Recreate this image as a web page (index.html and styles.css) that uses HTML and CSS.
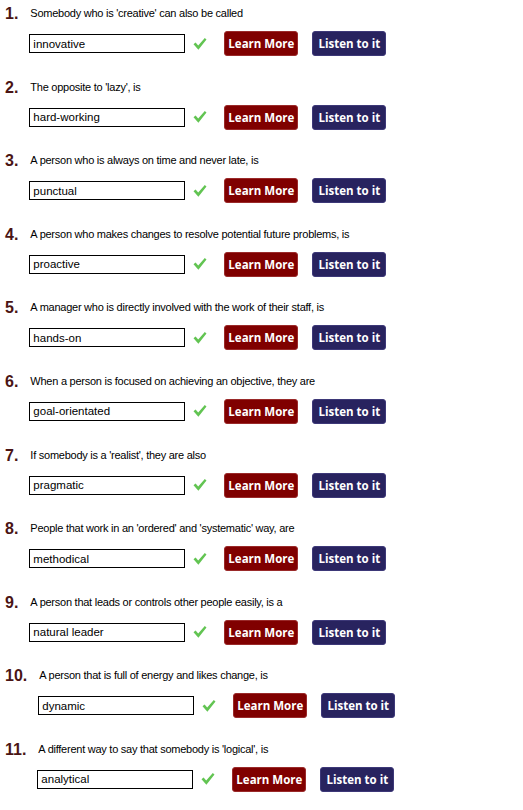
FILE: index.html
```html
<!DOCTYPE html>
<html>
<head>
<meta charset="utf-8">
<link rel="stylesheet" href="styles.css">
</head>
<body>
<ol class="quiz">
  <li class="item"><span class="num">1.</span><div class="body"><p class="q">Somebody who is 'creative' can also be called</p><div class="controls"><input class="answer" value="innovative" readonly><svg class="tick" viewBox="0 0 14 14"><path d="M0.5 7.2 L2.6 5.6 L5.2 8.6 L11.8 1 L13.5 2.5 L5.4 12.8 Z"/></svg><button class="btn learn">Learn More</button><button class="btn listen">Listen to it</button></div></div></li>
  <li class="item"><span class="num">2.</span><div class="body"><p class="q">The opposite to 'lazy', is</p><div class="controls"><input class="answer" value="hard-working" readonly><svg class="tick" viewBox="0 0 14 14"><path d="M0.5 7.2 L2.6 5.6 L5.2 8.6 L11.8 1 L13.5 2.5 L5.4 12.8 Z"/></svg><button class="btn learn">Learn More</button><button class="btn listen">Listen to it</button></div></div></li>
  <li class="item"><span class="num">3.</span><div class="body"><p class="q">A person who is always on time and never late, is</p><div class="controls"><input class="answer" value="punctual" readonly><svg class="tick" viewBox="0 0 14 14"><path d="M0.5 7.2 L2.6 5.6 L5.2 8.6 L11.8 1 L13.5 2.5 L5.4 12.8 Z"/></svg><button class="btn learn">Learn More</button><button class="btn listen">Listen to it</button></div></div></li>
  <li class="item"><span class="num">4.</span><div class="body"><p class="q">A person who makes changes to resolve potential future problems, is</p><div class="controls"><input class="answer" value="proactive" readonly><svg class="tick" viewBox="0 0 14 14"><path d="M0.5 7.2 L2.6 5.6 L5.2 8.6 L11.8 1 L13.5 2.5 L5.4 12.8 Z"/></svg><button class="btn learn">Learn More</button><button class="btn listen">Listen to it</button></div></div></li>
  <li class="item"><span class="num">5.</span><div class="body"><p class="q">A manager who is directly involved with the work of their staff, is</p><div class="controls"><input class="answer" value="hands-on" readonly><svg class="tick" viewBox="0 0 14 14"><path d="M0.5 7.2 L2.6 5.6 L5.2 8.6 L11.8 1 L13.5 2.5 L5.4 12.8 Z"/></svg><button class="btn learn">Learn More</button><button class="btn listen">Listen to it</button></div></div></li>
  <li class="item"><span class="num">6.</span><div class="body"><p class="q">When a person is focused on achieving an objective, they are</p><div class="controls"><input class="answer" value="goal-orientated" readonly><svg class="tick" viewBox="0 0 14 14"><path d="M0.5 7.2 L2.6 5.6 L5.2 8.6 L11.8 1 L13.5 2.5 L5.4 12.8 Z"/></svg><button class="btn learn">Learn More</button><button class="btn listen">Listen to it</button></div></div></li>
  <li class="item"><span class="num">7.</span><div class="body"><p class="q">If somebody is a 'realist', they are also</p><div class="controls"><input class="answer" value="pragmatic" readonly><svg class="tick" viewBox="0 0 14 14"><path d="M0.5 7.2 L2.6 5.6 L5.2 8.6 L11.8 1 L13.5 2.5 L5.4 12.8 Z"/></svg><button class="btn learn">Learn More</button><button class="btn listen">Listen to it</button></div></div></li>
  <li class="item"><span class="num">8.</span><div class="body"><p class="q">People that work in an 'ordered' and 'systematic' way, are</p><div class="controls"><input class="answer" value="methodical" readonly><svg class="tick" viewBox="0 0 14 14"><path d="M0.5 7.2 L2.6 5.6 L5.2 8.6 L11.8 1 L13.5 2.5 L5.4 12.8 Z"/></svg><button class="btn learn">Learn More</button><button class="btn listen">Listen to it</button></div></div></li>
  <li class="item"><span class="num">9.</span><div class="body"><p class="q">A person that leads or controls other people easily, is a</p><div class="controls"><input class="answer" value="natural leader" readonly><svg class="tick" viewBox="0 0 14 14"><path d="M0.5 7.2 L2.6 5.6 L5.2 8.6 L11.8 1 L13.5 2.5 L5.4 12.8 Z"/></svg><button class="btn learn">Learn More</button><button class="btn listen">Listen to it</button></div></div></li>
  <li class="item"><span class="num">10.</span><div class="body"><p class="q">A person that is full of energy and likes change, is</p><div class="controls"><input class="answer" value="dynamic" readonly><svg class="tick" viewBox="0 0 14 14"><path d="M0.5 7.2 L2.6 5.6 L5.2 8.6 L11.8 1 L13.5 2.5 L5.4 12.8 Z"/></svg><button class="btn learn">Learn More</button><button class="btn listen">Listen to it</button></div></div></li>
  <li class="item"><span class="num">11.</span><div class="body"><p class="q">A different way to say that somebody is 'logical', is</p><div class="controls"><input class="answer" value="analytical" readonly><svg class="tick" viewBox="0 0 14 14"><path d="M0.5 7.2 L2.6 5.6 L5.2 8.6 L11.8 1 L13.5 2.5 L5.4 12.8 Z"/></svg><button class="btn learn">Learn More</button><button class="btn listen">Listen to it</button></div></div></li>
</ol>
</body>
</html>
```
FILE: styles.css
```css
html, body {
  margin: 0;
  padding: 0;
  background: #fff;
}
body {
  font-family: "Liberation Sans", Arial, sans-serif;
  color: #000;
}
.quiz {
  list-style: none;
  margin: 0;
  padding: 5px 0 0 5px;
}
.item {
  display: flex;
  gap: 12px;
  height: 73.6px;
}
.num {
  font-family: "Liberation Sans", Arial, sans-serif;
  font-weight: bold;
  font-size: 16px;
  line-height: 16px;
  color: #4a1414;
  padding-top: 1px;
}
.body {
  display: flex;
  flex-direction: column;
}
.q {
  margin: 0;
  font-size: 11px;
  line-height: 16px;
  height: 16px;
  letter-spacing: -0.25px;
  color: #000;
}
.controls {
  display: flex;
  align-items: center;
  margin-top: 10px;
  height: 25px;
}
.answer {
  box-sizing: border-box;
  width: 156px;
  height: 19px;
  margin: 0 0 0 -1px;
  padding: 0 3px;
  border: 1px solid #000;
  font-family: "Liberation Sans", Arial, sans-serif;
  font-size: 11.5px;
  color: #000;
  background: #fff;
  outline: none;
}
.tick {
  width: 14px;
  height: 14px;
  margin-left: 8px;
  margin-right: 17px;
  fill: #62c452;
}
.btn {
  box-sizing: border-box;
  width: 74px;
  height: 25px;
  padding: 0;
  border-radius: 3px;
  font-family: "Open Sans", sans-serif;
  font-weight: bold;
  font-size: 11.5px;
  color: #fff;
  cursor: pointer;
}
.learn {
  background: #800000;
  border: 1px solid #9a2a2a;
}
.listen {
  margin-left: 14px;
  background: #28235f;
  border: 1px solid #3d3878;
}
```
